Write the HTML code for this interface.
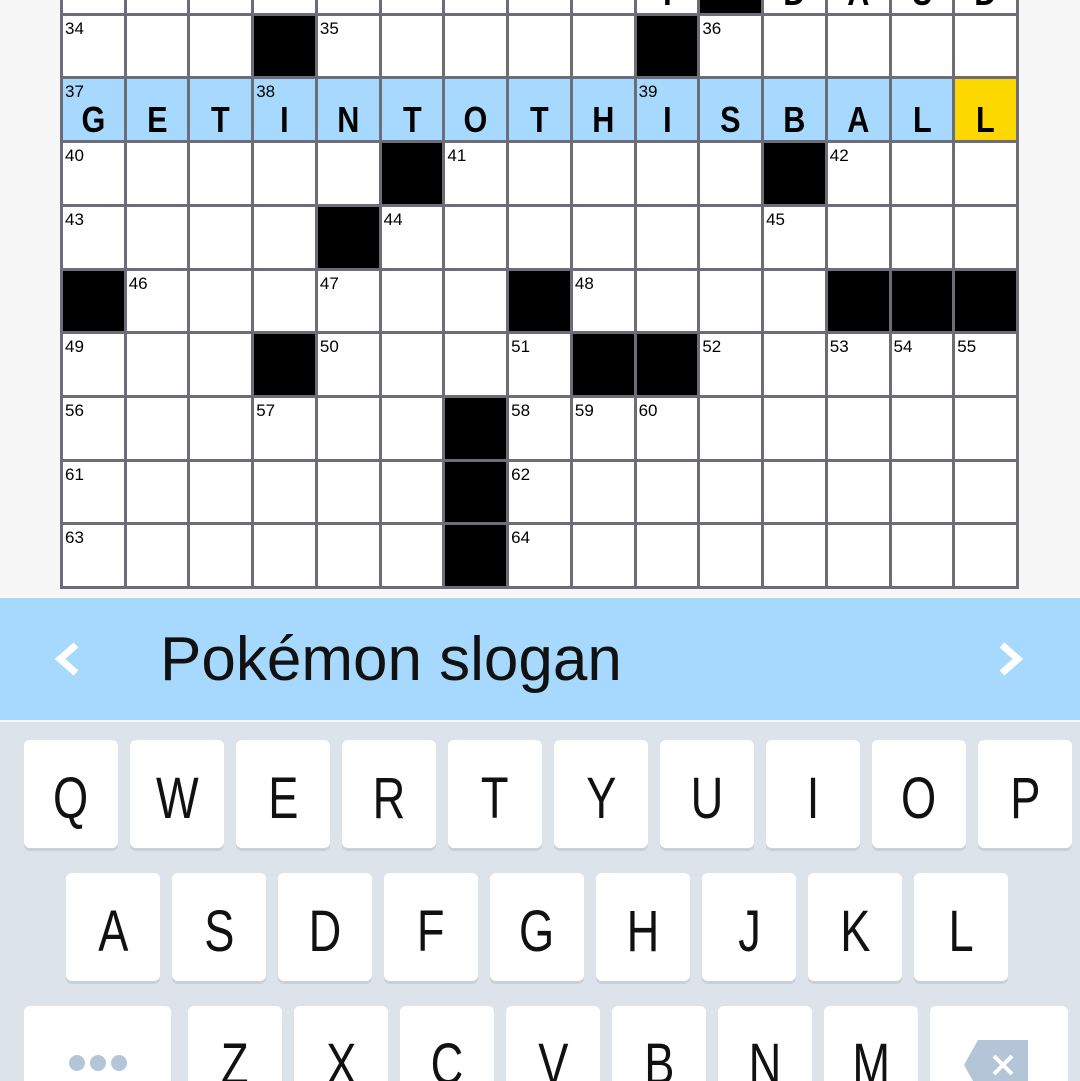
<!DOCTYPE html>
<html><head><meta charset="utf-8"><style>
*{margin:0;padding:0;box-sizing:border-box}
html,body{width:1080px;height:1081px;overflow:hidden}
body{background:#f7f7f7;font-family:"Liberation Sans",sans-serif;position:relative}
#g{position:absolute;left:60px;top:-51px;width:959px;height:640px;background:#6d6d77;padding:3px;display:grid;grid-template-columns:repeat(15,1fr);grid-template-rows:repeat(10,1fr);gap:3px}
#g div{background:#fff;position:relative}
#g .b{background:#000}
#g .h{background:#a7d8fd}
#g .y{background:#fcd800}
#g span{position:absolute;left:2px;top:3px;font-size:17px;color:#000}
#g i{position:absolute;left:0;right:0;top:20px;text-align:center;font-style:normal;font-weight:bold;font-size:36px;transform:scaleX(.85)}
#clue{position:absolute;left:0;top:598px;width:1080px;height:122px;background:#a7d8fd}
#clue .t{position:absolute;left:160px;top:26px;font-size:62px;color:#111}
#kb{position:absolute;left:0;top:722px;width:1080px;height:359px;background:#dde3ea;overflow:hidden}
.k{position:absolute;width:94px;height:108px;background:#fff;border-radius:6px;box-shadow:0 3px 0 #c9d0d8;text-align:center;font-size:58px;line-height:118px;color:#111}
.k b{font-weight:normal;display:inline-block;transform:scaleX(.78)}
</style></head><body>
<div id="g">
<div></div><div></div><div></div><div></div><div></div><div></div><div></div><div></div><div></div><div><i>I</i></div><div class="b"></div><div><i>D</i></div><div><i>A</i></div><div><i>U</i></div><div><i>D</i></div>
<div><span>34</span></div><div></div><div></div><div class="b"></div><div><span>35</span></div><div></div><div></div><div></div><div></div><div class="b"></div><div><span>36</span></div><div></div><div></div><div></div><div></div>
<div class="h"><span>37</span><i>G</i></div><div class="h"><i>E</i></div><div class="h"><i>T</i></div><div class="h"><span>38</span><i>I</i></div><div class="h"><i>N</i></div><div class="h"><i>T</i></div><div class="h"><i>O</i></div><div class="h"><i>T</i></div><div class="h"><i>H</i></div><div class="h"><span>39</span><i>I</i></div><div class="h"><i>S</i></div><div class="h"><i>B</i></div><div class="h"><i>A</i></div><div class="h"><i>L</i></div><div class="y"><i>L</i></div>
<div><span>40</span></div><div></div><div></div><div></div><div></div><div class="b"></div><div><span>41</span></div><div></div><div></div><div></div><div></div><div class="b"></div><div><span>42</span></div><div></div><div></div>
<div><span>43</span></div><div></div><div></div><div></div><div class="b"></div><div><span>44</span></div><div></div><div></div><div></div><div></div><div></div><div><span>45</span></div><div></div><div></div><div></div>
<div class="b"></div><div><span>46</span></div><div></div><div></div><div><span>47</span></div><div></div><div></div><div class="b"></div><div><span>48</span></div><div></div><div></div><div></div><div class="b"></div><div class="b"></div><div class="b"></div>
<div><span>49</span></div><div></div><div></div><div class="b"></div><div><span>50</span></div><div></div><div></div><div><span>51</span></div><div class="b"></div><div class="b"></div><div><span>52</span></div><div></div><div><span>53</span></div><div><span>54</span></div><div><span>55</span></div>
<div><span>56</span></div><div></div><div></div><div><span>57</span></div><div></div><div></div><div class="b"></div><div><span>58</span></div><div><span>59</span></div><div><span>60</span></div><div></div><div></div><div></div><div></div><div></div>
<div><span>61</span></div><div></div><div></div><div></div><div></div><div></div><div class="b"></div><div><span>62</span></div><div></div><div></div><div></div><div></div><div></div><div></div><div></div>
<div><span>63</span></div><div></div><div></div><div></div><div></div><div></div><div class="b"></div><div><span>64</span></div><div></div><div></div><div></div><div></div><div></div><div></div><div></div>
</div>
<div id="clue">
<svg style="position:absolute;left:52px;top:43px" width="30" height="36" viewBox="0 0 30 36"><path d="M24 4 L8 18 L24 32" fill="none" stroke="#fff" stroke-width="7" stroke-linejoin="miter"/></svg>
<div class="t">Pokémon slogan</div>
<svg style="position:absolute;left:996px;top:43px" width="30" height="36" viewBox="0 0 30 36"><path d="M6 4 L22 18 L6 32" fill="none" stroke="#fff" stroke-width="7"/></svg>
</div>
<div id="kb">
<div class="k" style="left:24px;top:18px"><b>Q</b></div>
<div class="k" style="left:130px;top:18px"><b>W</b></div>
<div class="k" style="left:236px;top:18px"><b>E</b></div>
<div class="k" style="left:342px;top:18px"><b>R</b></div>
<div class="k" style="left:448px;top:18px"><b>T</b></div>
<div class="k" style="left:554px;top:18px"><b>Y</b></div>
<div class="k" style="left:660px;top:18px"><b>U</b></div>
<div class="k" style="left:766px;top:18px"><b>I</b></div>
<div class="k" style="left:872px;top:18px"><b>O</b></div>
<div class="k" style="left:978px;top:18px"><b>P</b></div>
<div class="k" style="left:66px;top:151px"><b>A</b></div>
<div class="k" style="left:172px;top:151px"><b>S</b></div>
<div class="k" style="left:278px;top:151px"><b>D</b></div>
<div class="k" style="left:384px;top:151px"><b>F</b></div>
<div class="k" style="left:490px;top:151px"><b>G</b></div>
<div class="k" style="left:596px;top:151px"><b>H</b></div>
<div class="k" style="left:702px;top:151px"><b>J</b></div>
<div class="k" style="left:808px;top:151px"><b>K</b></div>
<div class="k" style="left:914px;top:151px"><b>L</b></div>
<div class="k" style="left:24px;top:284px;width:147px"><svg style="position:absolute;left:44px;top:47px" width="60" height="20"><circle cx="9" cy="10" r="8" fill="#b3c6d8"/><circle cx="30" cy="10" r="8" fill="#b3c6d8"/><circle cx="51" cy="10" r="8" fill="#b3c6d8"/></svg></div>
<div class="k" style="left:188px;top:284px"><b>Z</b></div>
<div class="k" style="left:294px;top:284px"><b>X</b></div>
<div class="k" style="left:400px;top:284px"><b>C</b></div>
<div class="k" style="left:506px;top:284px"><b>V</b></div>
<div class="k" style="left:612px;top:284px"><b>B</b></div>
<div class="k" style="left:718px;top:284px"><b>N</b></div>
<div class="k" style="left:824px;top:284px"><b>M</b></div>
<div class="k" style="left:930px;top:284px;width:138px"><svg style="position:absolute;left:34px;top:34px" width="64" height="50"><path d="M14 0 H64 V50 H14 L0 25 Z" fill="#b3c6d8"/><path d="M30 16 L48 34 M48 16 L30 34" stroke="#fff" stroke-width="4"/></svg></div>
</div>
</body></html>
